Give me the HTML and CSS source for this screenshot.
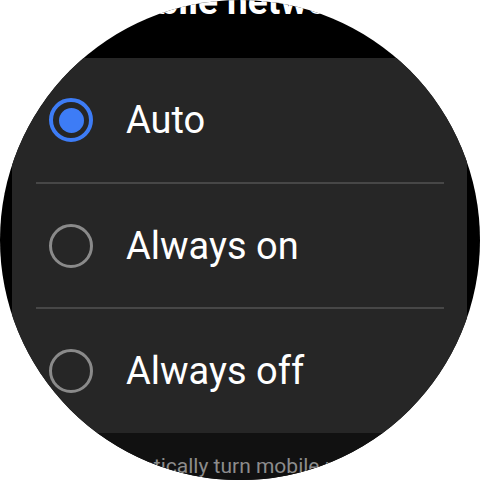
FILE: index.html
```html
<!DOCTYPE html>
<html lang="en">
<head>
<meta charset="utf-8">
<title>Mobile network</title>
<link rel="stylesheet" href="styles.css">
</head>
<body>
<div class="watch">
  <div class="header"><h1 class="title">Mobile network</h1></div>
  <div class="card">
    <div class="row">
      <span class="radio radio-on"><span class="dot"></span></span>
      <span class="label">Auto</span>
    </div>
    <div class="divider"></div>
    <div class="row">
      <span class="radio"></span>
      <span class="label">Always on</span>
    </div>
    <div class="divider"></div>
    <div class="row">
      <span class="radio"></span>
      <span class="label">Always off</span>
    </div>
  </div>
  <div class="footer">
    <p class="note">Automatically turn mobile network off when your watch is connected to your phone or Wi‑Fi</p>
  </div>
</div>
</body>
</html>
```

FILE: styles.css
```css
html, body {
  margin: 0;
  padding: 0;
  background: #ffffff;
}
body {
  font-family: Roboto, "Noto Sans", "Liberation Sans", sans-serif;
}
.watch {
  width: 480px;
  height: 480px;
  border-radius: 50%;
  overflow: hidden;
  background: #000000;
  display: flex;
  flex-direction: column;
}
.header {
  height: 58px;
  flex: none;
  padding-right: 14px;
}
.title {
  margin: -16px 0 0 0;
  font-size: 37px;
  line-height: 36px;
  font-weight: 700;
  color: #ffffff;
  text-align: center;
  white-space: nowrap;
}
.card {
  flex: none;
  margin: 0 13px 0 12px;
  height: 375px;
  background: #262626;
  display: flex;
  flex-direction: column;
}
.row {
  height: 124px;
  display: flex;
  align-items: center;
  padding-left: 37px;
  gap: 33px;
}
.row:nth-child(3) {
  height: 123px;
}
.divider {
  height: 2px;
  margin: 0 23px 0 24px;
  background: #474747;
}
.radio {
  box-sizing: border-box;
  width: 44px;
  height: 44px;
  border-radius: 50%;
  border: 3px solid #8a8a8a;
  display: flex;
  align-items: center;
  justify-content: center;
  flex: none;
}
.radio-on {
  border: 4px solid #3d7cf6;
}
.dot {
  width: 25px;
  height: 25px;
  border-radius: 50%;
  background: #3d7cf6;
}
.label {
  font-size: 38px;
  color: #ffffff;
  line-height: 44px;
}
.footer {
  flex: 1;
  background: #111111;
}
.note {
  margin: 0;
  padding: 19px 76px 0;
  font-size: 21px;
  line-height: 28px;
  color: #8c8c8c;
  text-align: center;
}
```
